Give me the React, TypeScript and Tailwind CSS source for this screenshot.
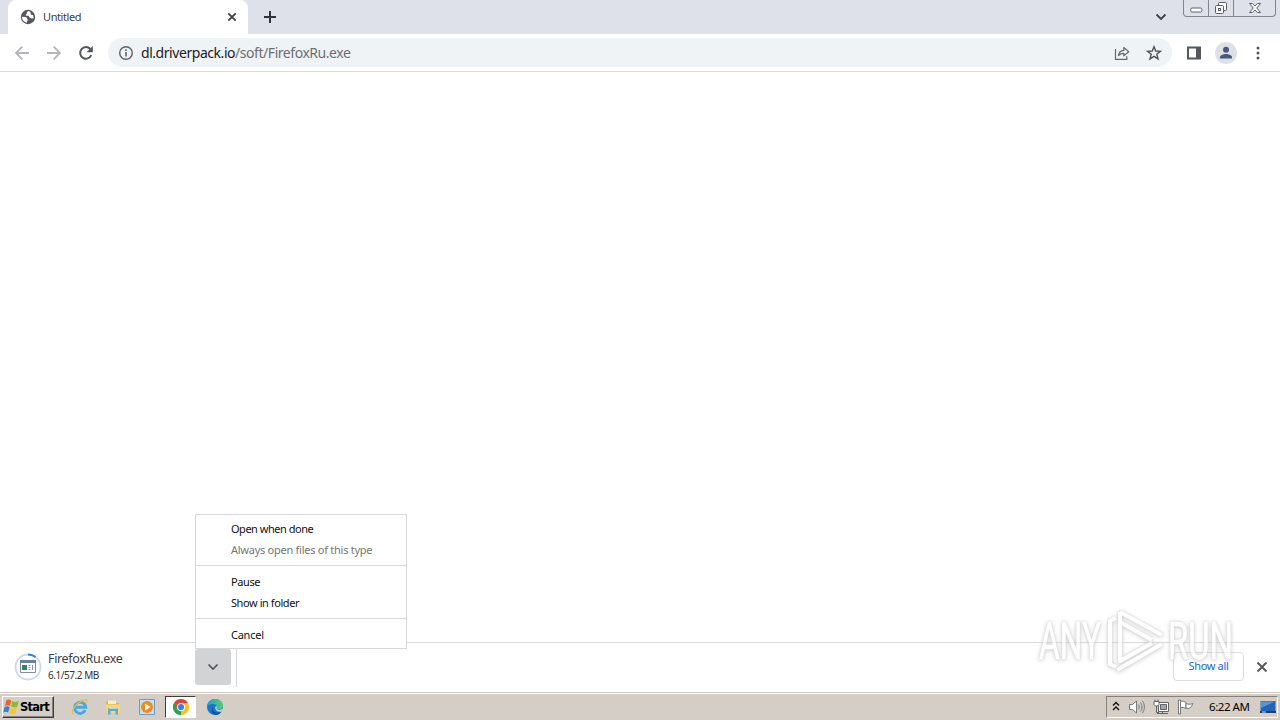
import React from "react";
import { clsx } from "clsx";

type MenuItem = { label: string; tracking: string; disabled?: boolean };

const MENU: MenuItem[][] = [
  [
    { label: "Open when done", tracking: "tracking-[-0.48px]" },
    { label: "Always open files of this type", tracking: "tracking-[-0.26px]", disabled: true },
  ],
  [
    { label: "Pause", tracking: "tracking-[-0.4px]" },
    { label: "Show in folder", tracking: "tracking-[-0.43px]" },
  ],
  [{ label: "Cancel", tracking: "tracking-[-0.25px]" }],
];

function GlobeIcon() {
  return (
    <svg width="16" height="16" viewBox="0 0 16 16">
      <circle cx="8" cy="8" r="7.2" fill="#54575b" />
      <path
        d="M8.6 2.1c-1 .5-2 1-1.7 2.1.2.8-1.3.8-1.2 1.9.1.8.9.8 1.9.7 1 0 1.4.5 1.5 1.3.2.8 1.4.3 1.5 1.2l2.8.2c.5-2.4-.4-3.6-1.5-3.7-1-.1-1.4-.4-1.2-1.4.1-.8-.4-1.9-2.1-2.3zM1.8 7.8l3.6.2c1 .1 1.7.7 1.7 1.5s.9.6.8 1.5c-.1.7-1 .7-1 1.6v1.2C4 13.3 2 11 1.8 7.8z"
        fill="#fff"
      />
    </svg>
  );
}

function TabStrip() {
  return (
    <div className="flex h-[34px] shrink-0 items-start bg-[#dee1e9] pl-2">
      <div className="flex h-[34px] w-60 items-center rounded-t-lg bg-white pl-3">
        <GlobeIcon />
        <span className="ml-[7px] text-[11px] tracking-[-0.4px] text-[#3c4043]">Untitled</span>
        <svg className="mr-[11px] ml-auto" width="10" height="10" viewBox="0 0 10 10">
          <path d="M1.3 1.3l7.4 7.4M8.7 1.3L1.3 8.7" stroke="#3c4043" strokeWidth="1.8" />
        </svg>
      </div>
      <svg className="mt-[10px] ml-[15px]" width="14" height="14" viewBox="0 0 14 14">
        <path d="M7 1v12M1 7h12" stroke="#303338" strokeWidth="2" />
      </svg>
      <svg className="mt-[13px] ml-auto" width="12" height="8" viewBox="0 0 12 8">
        <path d="M1.5 1.5L6 6l4.5-4.5" fill="none" stroke="#3c4043" strokeWidth="1.8" />
      </svg>
      <WindowButtons />
    </div>
  );
}

function WindowButtons() {
  return (
    <div className="mr-[4px] ml-4 flex h-[17px] w-[93px] overflow-hidden rounded-b-[4px] border border-t-0 border-[#83868c] text-[#5c6066]">
      <div className="flex w-[25px] justify-center border-r border-[#83868c] pt-[7px]">
        <svg width="13" height="6" viewBox="0 0 13 6">
          <rect x=".8" y="1" width="11" height="4" rx="1.3" fill="#fff" stroke="currentColor" />
        </svg>
      </div>
      <div className="flex w-[25px] justify-center border-r border-[#83868c] pt-[1px]">
        <svg width="14" height="14" viewBox="0 0 14 14" fill="#f8f9fb" stroke="currentColor">
          <rect x="4.5" y="1.5" width="8" height="8" rx="1" />
          <rect x="1.5" y="4.5" width="8" height="8" rx="1" />
          <rect x="4.5" y="7.5" width="2" height="2" />
        </svg>
      </div>
      <div className="flex flex-1 justify-center pt-[2px]">
        <svg width="14" height="12" viewBox="0 0 14 12">
          <path
            d="M1.5 1.5h3L7 4l2.5-2.5h3L8.8 6l3.7 4.5h-3L7 8l-2.5 2.5h-3L5.2 6z"
            fill="#f8f9fb"
            stroke="currentColor"
            strokeLinejoin="round"
          />
        </svg>
      </div>
    </div>
  );
}

function Toolbar() {
  return (
    <div className="flex h-[38px] shrink-0 items-center border-b border-[#d9dbdd] bg-white pl-[14px]">
      <svg width="16" height="16" viewBox="0 0 16 16" fill="none" stroke="#b4b6b9" strokeWidth="1.8">
        <path d="M15 8H2M8.3 1.7L2 8l6.3 6.3" />
      </svg>
      <svg className="ml-4" width="16" height="16" viewBox="0 0 16 16" fill="none" stroke="#b4b6b9" strokeWidth="1.8">
        <path d="M1 8h13M7.7 1.7L14 8l-6.3 6.3" />
      </svg>
      <svg className="ml-4" width="16" height="16" viewBox="0 0 16 16">
        <path d="M13.3 10.2A5.8 5.8 0 1 1 12.3 4" fill="none" stroke="#54575b" strokeWidth="2" />
        <path d="M14.8 1v6.3H8.5z" fill="#54575b" />
      </svg>

      {/* Address bar */}
      <div className="ml-[14px] flex h-[29px] w-[1064px] items-center rounded-full bg-[#f0f3f5] px-[10px]">
        <svg width="16" height="16" viewBox="0 0 16 16">
          <circle cx="8" cy="8" r="6.3" fill="none" stroke="#5f6368" strokeWidth="1.4" />
          <path d="M8 7v4.5M8 4.3v1.6" stroke="#5f6368" strokeWidth="1.6" />
        </svg>
        <span className="ml-[7px] text-[14px] tracking-[-0.45px] whitespace-nowrap text-[#6b6f74]">
          <span className="text-[#202124]">dl.driverpack.io</span>/soft/FirefoxRu.exe
        </span>
        <svg className="ml-auto" width="16" height="16" viewBox="0 0 16 16" fill="none" stroke="#64686c" strokeWidth="1.2">
          <path d="M1.5 4v10.3h11.3v-3" />
          <path d="M4.5 10.5c.4-3.3 2.2-5 5.3-5.2V2.5L14.7 6.7 9.8 10.9V8.3c-2.3 0-4 .7-5.3 2.2z" strokeLinejoin="round" />
        </svg>
        <svg className="ml-4" width="16" height="16" viewBox="0 0 16 16">
          <path
            d="M8 1.7l1.7 4.3 4.7.3-3.6 3 1.2 4.6L8 11.3l-4 2.6 1.2-4.6-3.6-3 4.7-.3z"
            fill="none"
            stroke="#4f5357"
            strokeWidth="1.4"
          />
        </svg>
      </div>

      <svg className="ml-[14px]" width="16" height="16" viewBox="0 0 16 16">
        <path d="M1 1.5h14v13H1zM3 3.5v9h7v-9z" fill="#54575b" fillRule="evenodd" />
      </svg>
      <svg className="ml-[13px]" width="22" height="22" viewBox="0 0 22 22">
        <circle cx="11" cy="11" r="11" fill="#dde1e7" />
        <circle cx="11" cy="7.8" r="3" fill="#4a5878" />
        <path d="M5 16.5v-1.400c0-2.200 4-3.200 6-3.200s6 1 6 3.200v1.400z" fill="#4a5878" />
      </svg>
      <svg className="ml-[19px]" width="4" height="16" viewBox="0 0 4 16" fill="#54575b">
        <circle cx="2" cy="3" r="1.5" />
        <circle cx="2" cy="8" r="1.5" />
        <circle cx="2" cy="13" r="1.5" />
      </svg>
    </div>
  );
}

function DownloadMenu() {
  return (
    <div className="absolute bottom-[36px] left-0 z-10 w-[212px] border border-[#d6d7d8] bg-white pt-1 pb-[2px]">
      {MENU.map((group, i) => (
        <div key={i} className={clsx(i > 0 && "mt-1 border-t border-[#d6d7d8] pt-[6px]")}>
          {group.map((item) => (
            <div
              key={item.label}
              className={clsx(
                "flex h-[21px] items-center pl-[35px] text-[11px] whitespace-nowrap",
                item.tracking,
                item.disabled ? "text-[#757575]" : "text-[#111]"
              )}
            >
              {item.label}
            </div>
          ))}
        </div>
      ))}
    </div>
  );
}

function DownloadShelf() {
  return (
    <div className="flex h-[50px] shrink-0 border-t border-[#d9dbdd] bg-white">
      <div className="flex w-[195px] pt-[6px] pl-[14px]">
        <svg className="mt-1" width="28" height="28" viewBox="0 0 28 28">
          <circle cx="14" cy="14" r="12.5" fill="#fff" stroke="#ccd8ee" strokeWidth="1.8" />
          <path d="M14 1.5a12.5 12.5 0 0 1 7.5 2.5" fill="none" stroke="#3b78dc" strokeWidth="2" />
          <path d="M6.5 7.5h15v12h-15z" fill="#fff" stroke="#7f8d99" />
          <path d="M6 7h16v3H6z" fill="#678299" />
          <path d="M8 12h5v5H8z" fill="#3a8068" />
          <path d="M14.5 12.5h2M14.5 14.5h2M14.5 16.5h2M18.5 12v5" stroke="#849ab2" />
        </svg>
        <div className="ml-[6px] flex flex-col whitespace-nowrap">
          <span className="text-[12.5px] leading-[19px] tracking-[-0.35px] text-[#3c4043]">FirefoxRu.exe</span>
          <span className="text-[10px] leading-[14px] tracking-[-0.45px] text-[#303236]">6.1/57.2 MB</span>
        </div>
      </div>
      <div className="relative mt-[6px] flex h-9 w-9 items-center justify-center rounded-[3px] bg-[#d2d3d4]">
        <svg width="12" height="8" viewBox="0 0 12 8">
          <path d="M1.5 1.5L6 6l4.5-4.5" fill="none" stroke="#54575b" strokeWidth="1.7" />
        </svg>
        <DownloadMenu />
      </div>
      <div className="mt-[6px] ml-[5px] h-[38px] w-px bg-[#d5d6d8]" />
      <div className="mt-[9px] mr-[12px] ml-auto flex h-[29px] w-[71px] items-center justify-center rounded-[4px] border border-[#dadce0] text-[11px] tracking-[-0.35px] text-[#1a66d2]">
        Show all
      </div>
      <svg className="mt-[18px] mr-[12px]" width="12" height="12" viewBox="0 0 12 12">
        <path d="M1.5 1.5l9 9M10.5 1.5l-9 9" stroke="#54575b" strokeWidth="1.9" />
      </svg>
    </div>
  );
}

function StartFlag() {
  return (
    <svg className="shrink-0" width="17" height="16" viewBox="0 0 17 16">
      <path d="M3.2 1.3C5 .3 6.5.3 8.3 1.4L7 7C5.3 6 3.8 6 2 7z" fill="#ef642a" />
      <path d="M9.3 2c1.8 1.1 3.5 1.3 6.5.1L14.3 7.7c-2.4 1.1-4.3.9-6.2-.3z" fill="#8bbc37" />
      <path d="M1.6 8.1c1.7-1 3.3-1 5 0l-1.4 5.500c-1.700-1-3.300-1-5 .1z" fill="#3482cc" />
      <path d="M7.7 8.6c1.8 1.1 3.8 1.2 6.2.1l-1.400 5.500c-2.300 1-4.200.9-6.200-.2z" fill="#f8c52c" />
    </svg>
  );
}

function IeIcon() {
  return (
    <svg width="18" height="18" viewBox="0 0 18 18" fill="none">
      <path d="M14.3 12.2a5.6 5.6 0 1 1 .5-2.9H5" stroke="#46abe2" strokeWidth="2.9" />
      <path d="M2.5 15.8C-.8 14 4.5 5.5 11.5 2.4c3.8-1.6 5.3-.6 4.2 2.1" stroke="#e8bd42" strokeWidth="1.3" />
    </svg>
  );
}

function FolderIcon() {
  return (
    <svg width="16" height="16" viewBox="0 0 16 16">
      <path d="M1 2.5h5L7.5 4H14v10H1z" fill="#d9b54c" />
      <path d="M3 1.5h8V5H3z" fill="#f7efc3" />
      <path d="M1 5.5h14V14H1z" fill="#f2d680" />
      <path d="M3 15.5v-6h10v6h-2.500v-3.500h-5v3.500z" fill="#5fa8d8" />
      <path d="M4 9h8" stroke="#bfe0f2" />
    </svg>
  );
}

function MediaIcon() {
  return (
    <svg width="16" height="16" viewBox="0 0 16 16">
      <path d="M.5.5h15v15H.5z" fill="#c9def0" stroke="#6c9bc8" />
      <circle cx="8" cy="8" r="6" fill="#f08b1d" />
      <path d="M6 4.5L11.5 8 6 11.5z" fill="#fff" />
    </svg>
  );
}

function ChromeIcon() {
  return (
    <svg width="16" height="16" viewBox="0 0 16 16">
      <path d="M8 8L1.07 4A8 8 0 0 1 14.93 4z" fill="#e34133" />
      <path d="M8 8l6.93-4A8 8 0 0 1 8 16z" fill="#fbc116" />
      <path d="M8 8v8A8 8 0 0 1 1.07 4z" fill="#2da24c" />
      <path d="M8 4h6.93L11.5 10z" fill="#fbc116" />
      <path d="M4.54 10L1.07 4 8 4z" fill="#e34133" />
      <path d="M1.07 4l3.47 6L8 12l-2 3.7A8 8 0 0 1 1.07 4z" fill="#2da24c" />
      <circle cx="8" cy="8" r="4" fill="#fff" />
      <circle cx="8" cy="8" r="3.1" fill="#3c7de6" />
    </svg>
  );
}

function EdgeIcon() {
  return (
    <svg width="16" height="16" viewBox="0 0 16 16">
      <defs>
        <linearGradient id="edge-top" x1="0" x2="1">
          <stop offset="0" stopColor="#249dde" />
          <stop offset="1" stopColor="#55cf72" />
        </linearGradient>
      </defs>
      <circle cx="8" cy="8" r="8" fill="#1678cc" />
      <path d="M.1 7.5C.5 3.2 3.8 0 8.2 0c4.5 0 7.8 3.1 7.8 6.6 0 2.5-1.8 4-4.2 4-1.7 0-2.5-.7-2-1.6C10.5 6.5 8.3 5 5.8 5 3.2 5 .9 6 .1 7.5z" fill="url(#edge-top)" />
      <path d="M5.9 8.3c-1 3.3 1.8 6 5.4 5.3 1.6-.3 2.6-.8 3.5-1.5A8 8 0 0 1 9.3 16C5 15.5 3.3 11.3 5.9 8.3z" fill="#124f98" />
      <path d="M8.3 8c.3-.9 1.6-.9 1.7.2 0 .6-.4.9-.4 1.3 0 .9 1.2 1.4 2.6 1.4 1.5 0 2.7-.5 3.5-1.3l.4 1.200-1.300 1.700C11.300 13.800 7.600 11.500 8.300 8z" fill="#d5cec6" />
    </svg>
  );
}

function Tray() {
  return (
    <div className="mr-[2px] ml-auto flex h-[22px] w-[172px] items-center border border-t-[#85817b] border-r-white border-b-white border-l-[#85817b] pl-[5px]">
      <svg width="8" height="11" viewBox="0 0 8 11" fill="none" stroke="#111" strokeWidth="1.4">
        <path d="M1 4.5l3-3 3 3M1 9l3-3 3 3" />
      </svg>
      <svg className="ml-[8px]" width="18" height="16" viewBox="0 0 18 16" fill="none" stroke="#77787a">
        <path d="M1.5 5.5h3L8.5 2v12l-4-3.500h-3z" fill="#fff" />
        <path d="M10.5 5.5c1 1.5 1 3.5 0 5M12.5 3.5c2 2.5 2 6.5 0 9M14.5 2c2.5 3.5 2.5 8.5 0 12" />
      </svg>
      <svg className="ml-[7px]" width="16" height="16" viewBox="0 0 16 16" stroke="#626366">
        <path d="M5.5 3.5h10v9h-10z" fill="#fff" />
        <path d="M7.5 5.5h6v5h-6z" fill="#a3a5a9" />
        <path d="M4 14.5h11M9.5 12.5v2M3.5 7v6.5H6" fill="none" />
        <path d="M1 2.5h5v3L4.5 7h-2L1 5.5zM2 .5v2M5 .5v2" fill="#fff" />
      </svg>
      <svg className="ml-[8px]" width="17" height="16" viewBox="0 0 17 16" fill="#fff" stroke="#77787a">
        <path d="M1.5 1h2v14h-2z" />
        <path d="M3.5 2.5c2-1 4 0 5.5 1v6c-2-1-3.500-1.500-5.500-.8z" />
        <path d="M9 4.5c2 1 4 1 7 0-1 1.5-1.5 4-4 5l-3-.5z" />
      </svg>
      <span className="ml-[15px] w-[48px] text-[11.5px] tracking-[-0.45px] whitespace-nowrap text-black">6:22 AM</span>
      <svg className="ml-[3px]" width="16" height="14" viewBox="0 0 16 14">
        <path d="M.5 1h15v10H.5z" fill="#2564b4" />
        <path d="M1 1.5h14L1 8z" fill="#5795d9" />
        <path d="M0 11h16v2H0z" fill="#1e3d72" />
        <path d="M2 12h4" stroke="#c7d8ed" />
      </svg>
    </div>
  );
}

function Taskbar() {
  return (
    <div className="flex h-[28px] shrink-0 items-center border-t border-[#d5cec6] bg-[#d5cec6] shadow-[inset_0_1px_0_#fff]">
      <button className="ml-[2px] flex h-[22px] w-[52px] items-center border border-t-white border-r-[#403e3b] border-b-[#403e3b] border-l-white shadow-[inset_-1px_-1px_0_#85817b]">
        <StartFlag />
        <span className="pt-[2px] font-['DejaVu_Sans',sans-serif] text-[11.5px] font-bold tracking-[-0.75px] text-black">
          Start
        </span>
      </button>
      <div className="ml-[17px] flex items-center">
        <IeIcon />
        <div className="ml-[16px]"><FolderIcon /></div>
        <div className="ml-[18px]"><MediaIcon /></div>
        <div className="ml-[10px] flex h-[22px] w-[31px] items-center justify-center border border-t-[#403e3b] border-r-white border-b-white border-l-[#403e3b] bg-white">
          <ChromeIcon />
        </div>
        <div className="ml-[11px]"><EdgeIcon /></div>
      </div>
      <Tray />
    </div>
  );
}

function Watermark() {
  return (
    <svg
      className="pointer-events-none absolute top-[590px] left-[1020px] z-20 opacity-70 [filter:drop-shadow(0_0_1px_#c4c4c4)_drop-shadow(0_1px_2px_#c4c4c4)]"
      width="240"
      height="96"
      viewBox="-10 -10 240 96"
    >
      <g fill="#fff" stroke="#fff" strokeWidth=".6" fontFamily="Roboto, sans-serif" fontSize="51">
        <text x="9" y="59" textLength="62" lengthAdjust="spacingAndGlyphs">ANY</text>
        <text x="138" y="59" textLength="65" lengthAdjust="spacingAndGlyphs">RUN</text>
      </g>
      <g fill="none" stroke="#fff" strokeWidth="4" strokeLinejoin="round">
        <path d="M86 18l-6 3v43l6 3" />
        <path d="M90 12l42 23M90 12v49l32-18M90 22l32 18" />
        <path d="M87 70l45-26" />
      </g>
    </svg>
  );
}

export default function App() {
  return (
    <div className="relative flex h-[720px] w-[1280px] flex-col overflow-hidden bg-white font-['Noto_Sans','Liberation_Sans',sans-serif]">
      <TabStrip />
      <Toolbar />
      <main className="flex-1 bg-white" />
      <DownloadShelf />
      <Taskbar />
      <Watermark />
    </div>
  );
}
